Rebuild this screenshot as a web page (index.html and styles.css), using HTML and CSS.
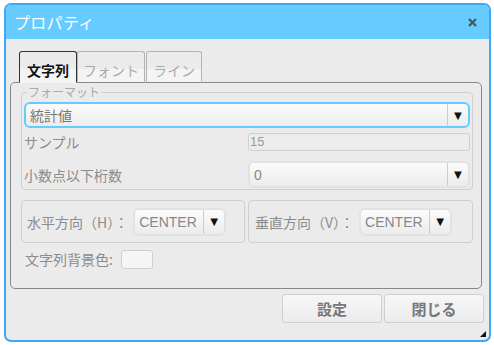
FILE: index.html
```html
<!DOCTYPE html>
<html lang="ja">
<head>
    <meta charset="UTF-8">
    <title>プロパティ</title>
    <link rel="stylesheet" href="styles.css">
</head>
<body>
    <div class="dialog">
        <!-- Title bar -->
        <div class="titlebar">
            <span class="title">プロパティ</span>
            <span class="close">
                <svg width="9" height="9" viewBox="0 0 9 9"><path d="M1 1 L8 8 M8 1 L1 8" stroke="#555" stroke-width="2.4"/></svg>
            </span>
        </div>

        <div class="content">
            <!-- Tabs -->
            <div class="tabs">
                <div class="tab active tab-text">文字列</div>
                <div class="tab tab-font">フォント</div>
                <div class="tab tab-line">ライン</div>
            </div>

            <div class="panel">
                <fieldset class="format">
                    <legend>フォーマット</legend>
                    <div class="select focus wide">
                        <span class="select-value">統計値</span>
                        <span class="select-arrow">&#9660;</span>
                    </div>
                    <div class="row row-sample">
                        <span class="label">サンプル</span>
                        <div class="input">15</div>
                    </div>
                    <div class="row row-digits">
                        <span class="label">小数点以下桁数</span>
                        <div class="select digits">
                            <span class="select-value">0</span>
                            <span class="select-arrow">&#9660;</span>
                        </div>
                    </div>
                </fieldset>

                <div class="align-row">
                    <div class="align-box box-h">
                        <span class="label">水平方向（H）：</span>
                        <div class="select small">
                            <span class="select-value">CENTER</span>
                            <span class="select-arrow">&#9660;</span>
                        </div>
                    </div>
                    <div class="align-box box-v">
                        <span class="label">垂直方向（V）：</span>
                        <div class="select small">
                            <span class="select-value">CENTER</span>
                            <span class="select-arrow">&#9660;</span>
                        </div>
                    </div>
                </div>

                <div class="bg-row">
                    <span class="label">文字列背景色:</span>
                    <span class="color-box"></span>
                </div>
            </div>

            <!-- Actions -->
            <div class="actions">
                <button>設定</button>
                <button>閉じる</button>
            </div>
        </div>

        <span class="grip"></span>
    </div>
</body>
</html>
```

FILE: styles.css
```css
body {
    margin: 0;
    background: #fff;
    font-family: "Liberation Sans", "Noto Sans CJK JP", sans-serif;
}

.dialog {
    position: relative;
    box-sizing: border-box;
    width: 487px;
    height: 339px;
    margin: 3px 0 0 4px;
    border: 2px solid #3ea8f7;
    border-radius: 7px;
    background: #ebebeb;
    overflow: hidden;
}

.titlebar {
    display: flex;
    justify-content: space-between;
    align-items: center;
    height: 34px;
    padding: 0 12px 0 8px;
    background: #66ccff;
}

.title {
    color: #fff;
    font-family: "Noto Sans CJK JP", sans-serif;
    font-size: 16px;
    letter-spacing: 0.3px;
}

.close {
    display: flex;
    margin-top: 1px;
}

.content {
    padding: 12px 5px 0 4px;
}

.tabs {
    display: flex;
    margin-left: 9px;
    position: relative;
    z-index: 1;
    margin-bottom: -1px;
}

.tab {
    box-sizing: border-box;
    height: 32px;
    padding-top: 9px;
    line-height: 20px;
    text-align: center;
    font-size: 14px;
    color: #aaa;
    border: 1px solid #b4b4b4;
    border-bottom: 1px solid #888;
    border-radius: 3px 3px 0 0;
    background: linear-gradient(to bottom, #ebebeb 0, #ebebeb 58%, #f4f4f4 58%);
}

.tab.active {
    color: #111;
    font-weight: bold;
    border-color: #333;
    border-bottom-color: #f4f4f4;
}

.tab-text { width: 58px; }
.tab-font { width: 68px; }
.tab-line { width: 56px; margin-left: 1px; }

.panel {
    box-sizing: border-box;
    width: 472px;
    height: 207px;
    border: 1px solid #888;
    border-radius: 5px;
}

.label {
    color: #8c8c8c;
    font-size: 14px;
    font-family: "Noto Sans CJK JP", sans-serif;
}

.format {
    margin: 2px 8px 0 10px;
    padding: 3px 2px 1px 2px;
    border: 1px solid #cfcfcf;
    border-radius: 4px;
}

.format legend {
    margin-left: 3px;
    padding: 0 1px;
    font-size: 12px;
    line-height: 14px;
    color: #aaa;
    font-family: "Noto Sans CJK JP", sans-serif;
}

.select {
    box-sizing: border-box;
    display: flex;
    align-items: center;
    border: 2px solid #e2e2e2;
    border-radius: 6px;
    background: linear-gradient(to bottom, #fbfbfb, #ececec);
}

.select-value {
    flex: 1;
    font-size: 14px;
    color: #888;
    padding-left: 4px;
}

.select-arrow {
    align-self: stretch;
    display: flex;
    align-items: center;
    justify-content: center;
    width: 20px;
    border-left: 1px solid #ccc;
    font-size: 13px;
    color: #111;
}

.select.focus {
    border-color: #66ccff;
    height: 26px;
}

.select.focus .select-value {
    font-family: "Noto Sans CJK JP", sans-serif;
    color: #777;
}

.row {
    display: flex;
    align-items: center;
}

.row .label {
    width: 224px;
}

.row-sample {
    margin-top: 5px;
    height: 18px;
}

.input {
    box-sizing: border-box;
    width: 222px;
    height: 18px;
    border: 1px solid #cfcfcf;
    border-radius: 3px;
    background: #ececec;
    font-size: 13px;
    line-height: 16px;
    color: #999;
    padding-left: 1px;
}

.row-digits {
    margin-top: 10px;
    height: 27px;
}

.select.digits {
    width: 222px;
    height: 27px;
}

.align-row {
    display: flex;
    gap: 3px;
    margin: 10px 0 0 10px;
}

.align-box {
    box-sizing: border-box;
    display: flex;
    align-items: center;
    height: 43px;
    padding-left: 5px;
    border: 1px solid #cfcfcf;
    border-radius: 4px;
}

.box-h { width: 224px; }
.box-v { width: 225px; padding-left: 6px; }

.select.small {
    width: 93px;
    height: 28px;
    margin-left: 5px;
}

.select.small .select-value {
    padding-left: 4px;
}

.bg-row {
    display: flex;
    align-items: center;
    margin-top: 6px;
    padding-left: 14px;
}

.color-box {
    box-sizing: border-box;
    width: 32px;
    height: 19px;
    margin-left: 8px;
    border: 1px solid #cfcfcf;
    border-radius: 3px;
    background: #f5f5f5;
}

.actions {
    display: flex;
    justify-content: flex-end;
    gap: 2px;
    margin-top: 5px;
}

.actions button {
    width: 100px;
    height: 29px;
    border: 1px solid #cfcfcf;
    border-radius: 3px;
    background: linear-gradient(to bottom, #f7f7f7, #ececec);
    color: #777;
    font-weight: bold;
    font-size: 15px;
    font-family: "Noto Sans CJK JP", sans-serif;
    padding: 0;
}

.grip {
    position: absolute;
    right: 3px;
    bottom: 3px;
    width: 0;
    height: 0;
    border-left: 6px solid transparent;
    border-bottom: 6px solid #111;
}
```
